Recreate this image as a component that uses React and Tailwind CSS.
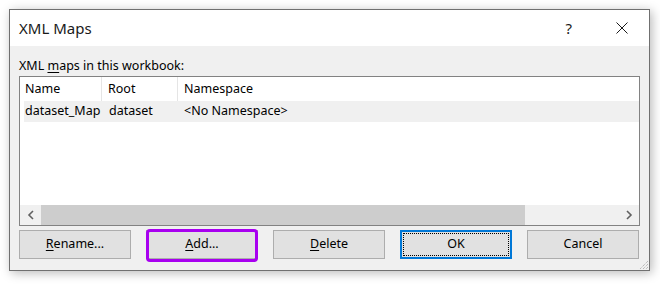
const FONT = { fontFamily: '"Noto Sans", "Open Sans", sans-serif' }

function Btn({ children, className = '' }) {
  return (
    <div className={`w-[112px] h-[29px] bg-[#e1e1e1] border border-[#adadad] flex items-center justify-center text-[12.5px] text-black ${className}`}>
      {children}
    </div>
  )
}

function U({ children }) {
  return <span className="underline underline-offset-2 decoration-1">{children}</span>
}

export default function App() {
  return (
    <div className="w-[660px] h-[284px] bg-white pt-[9px] pl-[9px]" style={FONT}>
      <div className="w-[641px] h-[262px] border border-[#707070] bg-[#f0f0f0] flex flex-col shadow-[2px_2px_10px_rgba(0,0,0,0.28)]">
        {/* title bar */}
        <div className="h-[37px] bg-white flex items-center pl-[9px] pr-[20px]">
          <span className="text-[15px] text-[#1a1a1a] leading-none">XML Maps</span>
          <span className="ml-auto text-[15px] text-[#1a1a1a] leading-none mr-[44px]">?</span>
          <svg width="12" height="12" viewBox="0 0 12 12" className="mr-[1px]">
            <path d="M0.5 0.5 L11.5 11.5 M11.5 0.5 L0.5 11.5" stroke="#1a1a1a" strokeWidth="1" fill="none" />
          </svg>
        </div>

        {/* body */}
        <div className="flex-1 flex flex-col px-[9px] pt-[13px]">
          <div className="text-[12.5px] text-black leading-[14px] h-[17px]">
            XML <U>m</U>aps in this workbook:
          </div>

          <div className="h-[150px] border border-[#828282] bg-white flex flex-col">
            <div className="h-[24px] flex text-[12.5px] text-black items-center">
              <div className="w-[82px] pl-[5px] h-full flex items-center border-r border-[#e5e5e5]">Name</div>
              <div className="w-[76px] pl-[6px] h-full flex items-center border-r border-[#e5e5e5]">Root</div>
              <div className="flex-1 pl-[6px] h-full flex items-center">Namespace</div>
            </div>
            <div className="h-[21px] flex text-[12.5px] text-black items-center bg-[#f0f0f0] ml-[4px]">
              <div className="w-[78px] pl-[1px]">dataset_Map</div>
              <div className="w-[76px] pl-[7px]">dataset</div>
              <div className="flex-1 pl-[6px]">&lt;No Namespace&gt;</div>
            </div>
            <div className="flex-1" />
            <div className="h-[20px] bg-[#f0f0f0] flex items-stretch">
              <div className="w-[21px] flex items-center justify-center">
                <svg width="8" height="10" viewBox="0 0 8 10">
                  <path d="M6 1 L2 5 L6 9" stroke="#606060" strokeWidth="1.6" fill="none" />
                </svg>
              </div>
              <div className="w-[484px] bg-[#cdcdcd]" />
              <div className="flex-1" />
              <div className="w-[21px] flex items-center justify-center">
                <svg width="8" height="10" viewBox="0 0 8 10">
                  <path d="M2 1 L6 5 L2 9" stroke="#606060" strokeWidth="1.6" fill="none" />
                </svg>
              </div>
            </div>
          </div>

          <div className="flex gap-[15px] mt-[4px]">
            <Btn><span><U>R</U>ename...</span></Btn>
            <div className="relative">
              <Btn><span><U>A</U>dd...</span></Btn>
              <div className="absolute -inset-x-[0px] -top-[1px] -bottom-[3px] border-[3px] border-[#a800f0] rounded-[4px]" />
            </div>
            <Btn><span><U>D</U>elete</span></Btn>
            <div className="w-[112px] h-[29px] bg-[#e1e1e1] border-2 border-[#0078d7] p-[1px]">
              <div className="w-full h-full border border-dotted border-black flex items-center justify-center text-[12.5px] text-black">
                OK
              </div>
            </div>
            <Btn>Cancel</Btn>
          </div>

          <div className="flex-1 flex justify-end items-end -mr-[9px]">
            <svg width="11" height="11" viewBox="0 0 11 11">
              <path d="M10 2 L2 10 M10 5 L5 10 M10 8 L8 10" stroke="#a0a0a0" strokeWidth="1" strokeDasharray="1 1" fill="none" />
            </svg>
          </div>
        </div>
      </div>
    </div>
  )
}
